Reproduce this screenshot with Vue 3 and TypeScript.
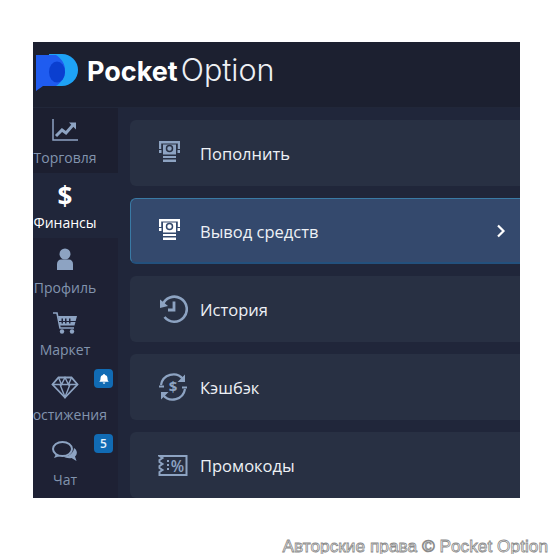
<template>
  <div class="page">
    <div class="frame">
      <header class="top">
        <svg class="logo" viewBox="0 0 44 37" width="44" height="37">
          <path d="M14 0H27A16 16 0 0 1 27 32H14Z" fill="#1ea2f5" />
          <path d="M1 1H21C27 5 30 10 30 16C30 23 27 28 21 32H8L1 37Z" fill="#1f5cf0" />
          <ellipse cx="22" cy="18" rx="8" ry="10.500" fill="#0a3fd0" />
        </svg>
        <div class="brand"><b>Pocket</b><span>Option</span></div>
      </header>
      <div class="body">
        <nav class="side">
          <div
            v-for="item in sideItems"
            :key="item.label"
            class="side-item"
            :class="{ active: item.active, compact: item.compact, first: item.first }"
          >
            <span v-if="item.glyph" class="side-glyph">{{ item.glyph }}</span>
            <svg v-else class="side-icon" viewBox="0 0 28 24" width="28" height="24" v-html="item.icon"></svg>
            <span class="side-label">{{ item.label }}</span>
            <span v-if="item.badge" class="badge">{{ item.badge }}</span>
            <span v-if="item.bell" class="badge">
              <svg viewBox="0 0 12 12" width="12" height="12">
                <path d="M6 1a1 1 0 0 1 1 1c2 .4 2.500 2 2.500 3.500 0 1.500.5 2.500 1.200 3.200H1.300C2 8 2.500 7 2.500 5.500 2.500 4 3 2.400 5 2a1 1 0 0 1 1-1ZM4.700 9.500h2.600A1.300 1.300 0 0 1 4.700 9.500Z" fill="#fff" />
              </svg>
            </span>
          </div>
        </nav>
        <main class="list">
          <div v-for="row in rows" :key="row.label" class="row" :class="{ selected: row.selected }">
            <svg class="row-icon" viewBox="0 0 30 30" width="30" height="30" v-html="row.icon"></svg>
            <span class="row-label">{{ row.label }}</span>
            <svg v-if="row.selected" class="chev" viewBox="0 0 10 14" width="10" height="14">
              <path d="M2 1.500 7.500 7 2 12.500" fill="none" stroke="#fff" stroke-width="2.200" />
            </svg>
          </div>
        </main>
      </div>
    </div>
    <div class="copy">Авторские права © Pocket Option</div>
  </div>
</template>

<script setup lang="ts">
type SideItem = {
  label: string
  icon?: string
  glyph?: string
  active?: boolean
  compact?: boolean
  first?: boolean
  badge?: string
  bell?: boolean
}

type Row = {
  label: string
  icon: string
  selected?: boolean
}

const atm = (hole: string) => `
  <path d="M1 3h21v8h-2.200V5.500H3.200V11H1Z" fill="currentColor"/>
  <path d="M5 6.500h13v10H5Z" fill="currentColor"/>
  <circle cx="11.500" cy="10.500" r="3" fill="none" stroke="${hole}" stroke-width="1.500"/>
  <path d="M5 18h13v2H5ZM5 21.500h13V24H5ZM1 12h2.500v3H1ZM19.500 12H22v3h-2.500Z" fill="currentColor"/>`

const sideItems: SideItem[] = [
  {
    label: 'Торговля',
    first: true,
    icon: `<path d="M2 1v21h25" fill="none" stroke="currentColor" stroke-width="1.500"/>
      <path d="M5 18l6-6 4 3 7-8" fill="none" stroke="currentColor" stroke-width="3"/>
      <path d="M18 4.500h7v7Z" fill="currentColor"/>`
  },
  {
    label: 'Финансы',
    active: true,
    glyph: '$'
  },
  {
    label: 'Профиль',
    icon: `<circle cx="14" cy="6" r="5.500" fill="currentColor"/>
      <path d="M6 22v-6c0-3 2-4.500 4-4.500h8c2 0 4 1.500 4 4.500v6Z" fill="currentColor"/>`
  },
  {
    label: 'Маркет',
    compact: true,
    icon: `<path d="M2 2h4l3 15h14" fill="none" stroke="currentColor" stroke-width="1.600"/>
      <path d="M7 5h19l-2.500 9.500H9Z" fill="currentColor"/>
      <path d="M10.500 7.500h1.500v5h-1.500ZM14 7.500h1.500v5H14ZM18 7.500h1.500v5H18ZM8 10h17v1H8Z" fill="#20243a"/>
      <circle cx="11" cy="20.500" r="2.200" fill="currentColor"/>
      <circle cx="21" cy="20.500" r="2.200" fill="currentColor"/>`
  },
  {
    label: 'Достижения',
    bell: true,
    icon: `<path d="M7.500 2.500h13l6 7-12.500 13L1.500 9.500Z" fill="none" stroke="currentColor" stroke-width="1.800"/>
      <path d="M1.500 9.500h25M9 9.500l5 12.500 5-12.500M7.500 2.500l3 7 3.500-7 3.500 7 3-7" fill="none" stroke="currentColor" stroke-width="1.400"/>`
  },
  {
    label: 'Чат',
    badge: '5',
    icon: `<ellipse cx="11.500" cy="9" rx="9.500" ry="7" fill="none" stroke="currentColor" stroke-width="2"/>
      <path d="M5 14l-2 4 6-2Z" fill="currentColor"/>
      <path d="M23 8c2.500 1.500 3.500 4 2.500 6.500-.5 1-1 1.500-1.500 2l1.500 4.500-5-3c-3 .5-6 0-8-1.500 5 0 10-3 10.500-8.500Z" fill="currentColor"/>`
  }
]

const rows: Row[] = [
  { label: 'Пополнить', icon: atm('#283043') },
  { label: 'Вывод средств', selected: true, icon: atm('#34496d') },
  {
    label: 'История',
    icon: `<path d="M4.500 11A12.500 12.500 0 1 1 6.500 23" fill="none" stroke="currentColor" stroke-width="2.600"/>
      <path d="M2 5.500 10 12 2 14Z" fill="currentColor"/>
      <path d="M16 7.500v8.500h-6" fill="none" stroke="currentColor" stroke-width="2.800"/>`
  },
  {
    label: 'Кэшбэк',
    icon: `<path d="M3 13A12.500 12.500 0 0 1 25 7" fill="none" stroke="currentColor" stroke-width="2.200"/>
      <path d="M27 17A12.500 12.500 0 0 1 5 23" fill="none" stroke="currentColor" stroke-width="2.200"/>
      <path d="M27 2.500v7.500h-7.500Z M3 27.500V20h7.500Z" fill="currentColor"/>
      <path d="M1 14.500h5M24 15.500h5" stroke="currentColor" stroke-width="2"/>
      <text x="15" y="20" text-anchor="middle" font-size="15" font-weight="700" font-family="Open Sans" fill="currentColor">$</text>`
  },
  {
    label: 'Промокоды',
    icon: `<path d="M1.500 6h27v19h-27v-3l3-2-3-2v-2l3-2-3-2v-2l3-2-3-2Z" fill="none" stroke="currentColor" stroke-width="2"/>
      <path d="M10 10v2M10 14v2M10 18v2" stroke="currentColor" stroke-width="2"/>
      <text x="19.500" y="21.500" text-anchor="middle" font-size="15.500" font-weight="600" font-family="Open Sans" fill="currentColor">%</text>`
  }
]
</script>

<style scoped>
.page {
  width: 554px;
  height: 554px;
  padding: 42px 0 0 33px;
  box-sizing: border-box;
  background: #fff;
  overflow: hidden;
  font-family: "Open Sans", "Noto Sans", sans-serif;
}

.frame {
  width: 487px;
  height: 456px;
  background: #20263a;
  overflow: hidden;
  display: flex;
  flex-direction: column;
}

.top {
  height: 66px;
  flex: none;
  display: flex;
  align-items: center;
  gap: 8px;
  background: #1c2030;
  border-bottom: 1px solid #212739;
  box-sizing: border-box;
  padding: 0 0 0 2px;
}

.logo {
  flex: none;
  margin-bottom: 5px;
}

.brand {
  font-family: Inter, "Open Sans", sans-serif;
  font-size: 27px;
  color: #fff;
  line-height: 1;
  margin-bottom: 9px;
  white-space: nowrap;
}

.brand b {
  font-weight: 700;
}

.brand span {
  font-size: 30.500px;
  font-weight: 300;
  color: #eef0f4;
  margin-left: 3px;
}

.body {
  flex: 1;
  display: flex;
  min-height: 0;
}

.side {
  width: 85px;
  flex: none;
  background: #1e2134;
  display: flex;
  flex-direction: column;
}

.side-item {
  position: relative;
  height: 65px;
  flex: none;
  box-sizing: border-box;
  padding: 10px 21px 0 0;
  display: flex;
  flex-direction: column;
  align-items: center;
  color: #8da3c2;
}

.side-item.first {
  background: #1c1f30;
}

.side-item.active {
  background: #20263a;
  color: #fff;
}

.side-item.compact {
  height: 62px;
  padding-top: 8px;
}

.side-icon {
  flex: none;
}

.side-glyph {
  flex: none;
  height: 24px;
  font-size: 26px;
  font-weight: 700;
  line-height: 26px;
  color: #fff;
}

.side-label {
  font-size: 14px;
  line-height: 20px;
  margin-top: 6px;
  white-space: nowrap;
  color: #8294ae;
}

.side-item.compact .side-label {
  margin-top: 5px;
}

.side-item.active .side-label {
  color: #fff;
}

.badge {
  position: absolute;
  left: 61px;
  top: 4px;
  width: 19px;
  height: 19px;
  border-radius: 4px;
  background: #116bb4;
  color: #e6f2fb;
  font-size: 12px;
  font-weight: 600;
  display: flex;
  align-items: center;
  justify-content: center;
}

.list {
  flex: 1;
  min-width: 0;
  padding: 12px 0 0 12px;
  display: flex;
  flex-direction: column;
  gap: 12px;
}

.row {
  flex: none;
  height: 66px;
  box-sizing: border-box;
  padding: 0 14px 0 28px;
  display: flex;
  align-items: center;
  border-radius: 6px 0 0 6px;
  background: #283043;
  color: #8da3c2;
}

.row.selected {
  background: #34496d;
  border: 1px solid #3a7aa5;
  border-bottom: 2px solid #23507c;
  border-right: none;
  padding-top: 1px;
  padding-left: 27px;
  color: #fff;
}

.row-icon {
  flex: none;
}

.row-label {
  margin-left: 12px;
  font-size: 16.500px;
  color: #eef1f6;
}

.chev {
  margin-left: auto;
}

.copy {
  margin-top: 40px;
  padding-right: 6px;
  text-align: right;
  font-family: "Liberation Sans", Arial, sans-serif;
  font-size: 17.300px;
  line-height: 16px;
  color: #fff;
  -webkit-text-stroke: 0.8px #8a8a8a;
  white-space: nowrap;
}
</style>
